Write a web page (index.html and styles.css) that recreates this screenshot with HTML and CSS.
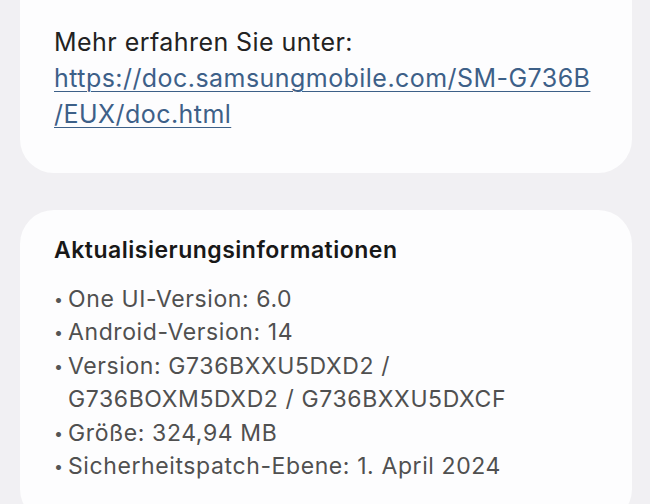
FILE: index.html
```html
<!DOCTYPE html>
<html lang="de">
<head>
    <meta charset="UTF-8">
    <meta name="viewport" content="width=device-width, initial-scale=1.0">
    <title>Software-Update</title>
    <link rel="stylesheet" href="styles.css">
</head>
<body>
    <div class="screen">
        <section class="card card-top">
            <p class="more-text">Mehr erfahren Sie unter:</p>
            <a href="#" class="doc-link">https://doc.samsungmobile.com/SM-G736B<br>/EUX/doc.html</a>
        </section>

        <section class="card">
            <h2 class="card-title">Aktualisierungsinformationen</h2>
            <ul class="info-list">
                <li><span>One UI-Version: 6.0</span></li>
                <li><span>Android-Version: 14</span></li>
                <li><span>Version: G736BXXU5DXD2 /<br>G736BOXM5DXD2 / G736BXXU5DXCF</span></li>
                <li><span>Größe: 324,94 MB</span></li>
                <li><span>Sicherheitspatch-Ebene: 1. April 2024</span></li>
            </ul>
        </section>
    </div>
</body>
</html>
```

FILE: styles.css
```css
body {
    font-family: Inter, Roboto, "Noto Sans", Arial, sans-serif;
    background-color: #f1f0f3;
    margin: 0;
    padding: 0;
}

.screen {
    display: flex;
    flex-direction: column;
    gap: 37px;
    padding: 0 18px 0 20px;
}

.card {
    background: #fdfdfe;
    border-radius: 34px;
    padding: 25px 34px 40px 34px;
}

.card-top {
    border-radius: 0 0 34px 34px;
    padding: 24px 34px 41px 34px;
    font-size: 25px;
    line-height: 36px;
    letter-spacing: 0.45px;
}

.more-text {
    margin: 0;
    color: #222222;
}

.doc-link {
    color: #3d6088;
    text-decoration: underline;
    text-underline-offset: 4px;
    text-decoration-thickness: 1px;
}

.card-title {
    margin: 0 0 18px 0;
    font-size: 23px;
    line-height: 30px;
    font-weight: 600;
    letter-spacing: 0.5px;
    color: #181818;
}

.info-list {
    list-style: none;
    margin: 0;
    padding: 0;
    font-size: 23px;
    line-height: 33.4px;
    letter-spacing: 0.6px;
    color: #505050;
}

.info-list li {
    display: flex;
}

.info-list li::before {
    content: "•";
    flex: 0 0 14px;
    font-size: 16px;
    letter-spacing: 0;
    color: #555555;
}
```
